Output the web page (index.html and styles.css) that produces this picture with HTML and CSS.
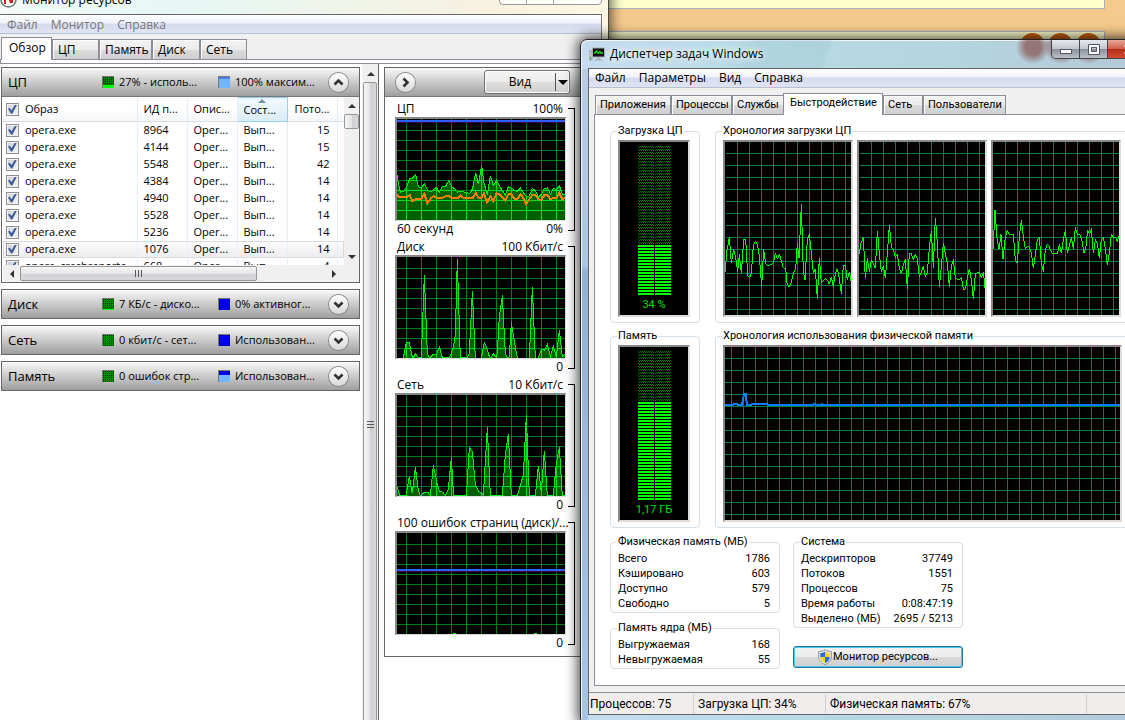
FILE: index.html
```html
<!DOCTYPE html>
<html lang="ru">
<head>
<meta charset="utf-8">
<title>Диспетчер задач Windows</title>
<link rel="stylesheet" href="styles.css">
</head>
<body>
<svg class="defs" width="0" height="0" aria-hidden="true">
  <defs>
    <path id="rm-grid" d="M28.5 0V303M73.5 0V303M118.5 0V303M163.5 0V303M208.5 0V303M253.5 0V303M298.5 0V303M343.5 0V303M388.5 0V303M433.5 0V303M478.5 0V303M0 34.5H504M0 64.5H504M0 94.5H504M0 124.5H504M0 154.5H504M0 184.5H504M0 214.5H504M0 244.5H504M0 274.5H504"/>
    <pattern id="tm-grid" width="12" height="12" y="11" patternUnits="userSpaceOnUse"><path d="M0 0H12V1H1V12H0Z" fill="#008040"/></pattern>
    <pattern id="tm-grid-mem" width="12" height="12" x="6" y="11" patternUnits="userSpaceOnUse"><path d="M0 0H12V1H1V12H0Z" fill="#008040"/></pattern>
    <pattern id="led-off" width="2" height="3" patternUnits="userSpaceOnUse"><path d="M0 0H1V1H0ZM1 1H2V2H1Z" fill="#008000"/></pattern>
    <pattern id="led-on" width="2" height="3" patternUnits="userSpaceOnUse"><path d="M0 0H2V2H0Z" fill="#00ff00"/></pattern>
    <pattern id="dots" width="2" height="2" patternUnits="userSpaceOnUse"><path d="M0 0H1V1H0Z" fill="#000" fill-opacity=".55"/></pattern>
    <symbol id="chev" viewBox="0 0 19 19"><path d="M5.500 7.500L9.500 11.500L13.500 7.500" fill="none" stroke="#333" stroke-width="2.600"/></symbol>
  </defs>
</svg>
<div class="desktop">
  <div class="panel panel-a"></div>
  <div class="panel panel-b"></div>
  <div class="orbs"><i></i><i></i><i></i></div>

  <section class="win resmon">
    <header class="rm-title">
      <svg width="17" height="17" viewBox="0 0 17 17"><circle cx="8.500" cy="8.500" r="7.500" fill="#fff" stroke="#777" stroke-width="1.500"/><path d="M5 3V13M8 4L11 12M12 5V12" stroke="#c22" stroke-width="2"/></svg>
      <span>Монитор ресурсов</span>
      <div class="rm-caption"><i></i><i></i><i></i></div>
    </header>
    <div class="rm-client">
      <nav class="menu rm-menu"><button>Файл</button><button>Монитор</button><button>Справка</button></nav>
      <div class="tabs rm-tabs" role="tablist">
        <button role="tab" class="tab on" aria-selected="true">Обзор</button><button role="tab" class="tab w46">ЦП</button><button role="tab" class="tab w52">Память</button><button role="tab" class="tab w48">Диск</button><button role="tab" class="tab w46">Сеть</button>
      </div>
      <div class="rm-rule"></div>
      <div class="rm-body">
        <div class="rm-left">
          <section class="card">
            <div class="bar">
              <h2>ЦП</h2>
              <span class="stat"><svg width="12" height="12"><rect width="12" height="12" fill="#008000"/><rect width="12" height="8" fill="url(#dots)"/><rect y="8" width="12" height="4" fill="#00ff00"/></svg>27% - исполь...</span>
              <span class="stat"><svg width="12" height="12"><rect width="12" height="12" fill="#73b4ff"/><rect width="12" height="2" fill="#4a80e8"/></svg>100% максим...</span>
              <button class="round" aria-label="Свернуть"><svg class="up" width="19" height="19"><use href="#chev"/></svg></button>
            </div>
            <div class="grid">
              <div class="view">
                <table>
                  <colgroup><col class="c-name"><col class="c-n"><col class="c-n"><col class="c-n"><col class="c-n"><col></colgroup>
                  <thead><tr><th><label><input type="checkbox" checked>Образ</label></th><th>ИД п...</th><th>Опис...</th><th class="sorted">Сост...</th><th class="num">Пото...</th><th></th></tr></thead>
                  <tbody>
                    <tr><td><label><input type="checkbox" checked>opera.exe</label></td><td>8964</td><td>Oper...</td><td>Вып...</td><td class="num">15</td><td></td></tr>
                    <tr><td><label><input type="checkbox" checked>opera.exe</label></td><td>4144</td><td>Oper...</td><td>Вып...</td><td class="num">15</td><td></td></tr>
                    <tr><td><label><input type="checkbox" checked>opera.exe</label></td><td>5548</td><td>Oper...</td><td>Вып...</td><td class="num">42</td><td></td></tr>
                    <tr><td><label><input type="checkbox" checked>opera.exe</label></td><td>4384</td><td>Oper...</td><td>Вып...</td><td class="num">14</td><td></td></tr>
                    <tr><td><label><input type="checkbox" checked>opera.exe</label></td><td>4940</td><td>Oper...</td><td>Вып...</td><td class="num">14</td><td></td></tr>
                    <tr><td><label><input type="checkbox" checked>opera.exe</label></td><td>5528</td><td>Oper...</td><td>Вып...</td><td class="num">14</td><td></td></tr>
                    <tr><td><label><input type="checkbox" checked>opera.exe</label></td><td>5236</td><td>Oper...</td><td>Вып...</td><td class="num">14</td><td></td></tr>
                    <tr class="hot"><td><label><input type="checkbox" checked>opera.exe</label></td><td>1076</td><td>Oper...</td><td>Вып...</td><td class="num">14</td><td></td></tr>
                    <tr><td><label><input type="checkbox" checked>opera_crashreporte...</label></td><td>668</td><td>Oper...</td><td>Вып...</td><td class="num">4</td><td></td></tr>
                  </tbody>
                </table>
              </div>
              <div class="vsb inner"><i class="ar ar-up"></i><i class="thumb"></i><i class="space"></i><i class="ar ar-down"></i></div>
              <div class="hsb"><i class="ar ar-left"></i><i class="thumb"><b class="grip"></b></i><i class="space"></i><i class="ar ar-right"></i></div>
            </div>
          </section>
          <section class="card"><div class="bar">
            <h2>Диск</h2>
            <span class="stat"><svg width="12" height="12"><rect width="12" height="12" fill="#008a00"/><rect width="12" height="10" fill="url(#dots)"/><rect y="10" width="12" height="2" fill="#00ff00"/></svg>7 КБ/с - диско...</span>
            <span class="stat"><svg width="12" height="12"><rect width="12" height="12" fill="#0000ff"/><rect width="12" height="12" fill="url(#dots)"/></svg>0% активног...</span>
            <button class="round" aria-label="Развернуть"><svg width="19" height="19"><use href="#chev"/></svg></button>
          </div></section>
          <section class="card"><div class="bar">
            <h2>Сеть</h2>
            <span class="stat"><svg width="12" height="12"><rect width="12" height="12" fill="#008a00"/><rect width="12" height="12" fill="url(#dots)"/></svg>0 кбит/с - сет...</span>
            <span class="stat"><svg width="12" height="12"><rect width="12" height="12" fill="#0000ff"/><rect width="12" height="12" fill="url(#dots)"/></svg>Использован...</span>
            <button class="round" aria-label="Развернуть"><svg width="19" height="19"><use href="#chev"/></svg></button>
          </div></section>
          <section class="card"><div class="bar">
            <h2>Память</h2>
            <span class="stat"><svg width="12" height="12"><rect width="12" height="12" fill="#008a00"/><rect width="12" height="12" fill="url(#dots)"/></svg>0 ошибок стр...</span>
            <span class="stat"><svg width="12" height="12"><rect width="12" height="12" fill="#73b4ff"/><rect width="12" height="4" fill="#0000ff"/><rect width="12" height="4" fill="url(#dots)"/></svg>Использован...</span>
            <button class="round" aria-label="Развернуть"><svg width="19" height="19"><use href="#chev"/></svg></button>
          </div></section>
        </div>
        <div class="vsb outer"><i class="ar ar-up"></i><i class="thumb"><b class="grip"></b></i></div>
        <div class="rm-right">
          <section class="card charts">
            <div class="bar">
              <button class="round" aria-label="Скрыть"><svg class="side" width="19" height="19"><use href="#chev"/></svg></button>
              <button class="split"><span>Вид</span><i></i></button>
            </div>
            <div class="meter">
              <div class="lab"><span>ЦП</span><span>100%</span></div>
              <svg class="plot" viewBox="0 0 504 303">
                <clipPath id="cp-cpu"><use href="#s-cpu"/></clipPath>
                <use href="#rm-grid" class="g"/>
                <path id="s-cpu" class="fill" transform="translate(-111 -177)" d="M108 480V345L111 345L116 375L122 396L132 393L140 380L149 356L158 354L167 344L175 380L184 384L193 370L203 390L212 396L221 388L230 382L238 396L247 380L257 378L266 362L275 380L284 386L293 396L302 393L311 396L330 400L338 385L347 338L355 372L365 318L372 368L382 405L391 347L400 377L410 360L418 377L427 392L436 405L445 380L454 384L463 390L472 394L481 384L490 398L499 410L508 408L517 385L526 392L535 412L544 402L553 386L562 384L571 402L580 384L589 390L598 377L607 402L618 402V480Z"/>
                <use href="#rm-grid" class="gl" clip-path="url(#cp-cpu)"/>
                <use href="#s-cpu" class="edge"/>
                <path class="orange" transform="translate(-111 -177)" d="M110 405L116 411L140 411L149 405L157 423L167 418L184 416L193 402L202 430L212 416L221 408L230 414L247 414L257 408L266 407L275 414L293 415L302 407L311 414L338 415L347 398L355 413L364 413L372 400L381 427L391 409L400 423L410 400L418 402L427 411L436 420L445 403L454 403L463 416L472 418L481 403L490 414L499 432L508 418L517 405L526 404L535 418L544 420L553 405L562 404L571 418L580 414L589 414L598 399L607 418L616 413"/>
                <path d="M0 10.500H504" stroke="#300040" stroke-width="3"/><path d="M0 6H504" class="blue"/>
              </svg>
              <div class="lab"><span>60 секунд</span><span>0%</span></div>
            </div>
            <div class="meter">
              <div class="lab"><span>Диск</span><span>100 Кбит/с</span></div>
              <svg class="plot" viewBox="0 0 504 303">
                <clipPath id="cp-disk"><use href="#s-disk"/></clipPath>
                <use href="#rm-grid" class="g"/>
                <path id="s-disk" class="fill" transform="translate(-51 -66)" d="M48 372L70 369L79 323L88 323L97 366L100 369L106 356L115 368L124 368L133 121L142 355L148 369L157 360L169 358L178 336L187 368L208 368L214 356L220 335L226 300L232 72L241 369L262 368L268 355L277 169L286 369L304 369L313 323L322 343L328 365L334 367L340 356L349 368L352 350L358 245L367 181L376 355L382 369L388 365L394 262L403 318L412 369L448 369L457 157L466 369L475 369L484 343L493 345L502 329L511 365L520 334L529 366L538 286L547 365L558 355V372Z"/>
                <use href="#rm-grid" class="gl" clip-path="url(#cp-disk)"/>
                <use href="#s-disk" class="edge"/>
              </svg>
              <div class="lab"><span></span><span>0</span></div>
            </div>
            <div class="meter">
              <div class="lab"><span>Сеть</span><span>10 Кбит/с</span></div>
              <svg class="plot" viewBox="0 0 504 303">
                <clipPath id="cp-net"><use href="#s-net"/></clipPath>
                <use href="#rm-grid" class="g"/>
                <path id="s-net" class="fill" transform="translate(-51 -480)" d="M48 785V755H51L60 782L78 782L88 724L97 775L106 697L115 765L121 782L133 772L145 773L151 782L160 691L172 748L178 768L190 773L196 782L202 770L205 764L214 667L220 770L222 782L259 782L268 637L277 650L286 750L295 768L307 774L310 782L322 577L331 782L367 782L376 660L385 598L394 782L412 782L430 720L439 541L448 782L466 782L475 694L484 772L493 648L502 782L520 782L529 685L538 637L547 782L558 782V785Z"/>
                <use href="#rm-grid" class="gl" clip-path="url(#cp-net)"/>
                <use href="#s-net" class="edge"/>
              </svg>
              <div class="lab"><span></span><span>0</span></div>
            </div>
            <div class="meter">
              <div class="lab"><span></span><span>100 ошибок страниц (диск)/...</span></div>
              <svg class="plot" viewBox="0 0 504 303">
                <use href="#rm-grid" class="g"/>
                <path d="M0 115.500H504" stroke="#300040" stroke-width="3"/><path d="M0 111H504" class="blue"/>
                <path d="M168 301.500H177M411 301.500H420" stroke="#0f0" stroke-width="3"/>
              </svg>
              <div class="lab"><span></span><span>0</span></div>
            </div>
          </section>
        </div>
      </div>
    </div>
  </section>

  <section class="win taskmgr">
    <header class="tm-title">
      <svg width="16" height="16" viewBox="0 0 16 16"><rect x="0" y="5" width="3" height="9" fill="#c8ccd0" stroke="#888" stroke-width=".6"/><rect x="1" y="11" width="1" height="2" fill="#0c0"/><rect x="3.500" y="2" width="12" height="9" fill="#111" stroke="#a8adb2"/><path d="M5 7H6L7.500 5L9 7.500L11 5.500L12 7H14" stroke="#1fe01f" fill="none" stroke-width="1.300"/><path d="M8 11.500H11V13H13V14.500H6V13H8Z" fill="#b0b4b8"/></svg>
      <h1>Диспетчер задач Windows</h1>
      <div class="caption">
        <button aria-label="Свернуть"><svg width="14" height="10"><rect x="1.500" y="5.500" width="11" height="4" fill="#fff" stroke="#556"/></svg></button>
        <button aria-label="Развернуть"><svg width="12" height="11"><path d="M.5.500H11.500V10.500H.5ZM3.500 3.500V7.500H8.500V3.500Z" fill="#fff" fill-rule="evenodd" stroke="#556"/></svg></button>
        <button class="close" aria-label="Закрыть"><svg width="13" height="11"><path d="M2 1L11 10M11 1L2 10" stroke="#fff" stroke-width="3"/></svg></button>
      </div>
    </header>
    <div class="tm-client">
      <nav class="menu tm-menu"><button>Файл</button><button>Параметры</button><button>Вид</button><button>Справка</button></nav>
      <div class="tabs tm-tabs" role="tablist">
        <button role="tab" class="tab t76">Приложения</button><button role="tab" class="tab t60">Процессы</button><button role="tab" class="tab t52">Службы</button><button role="tab" class="tab on" aria-selected="true">Быстродействие</button><button role="tab" class="tab t40">Сеть</button><button role="tab" class="tab t82">Пользователи</button>
      </div>
      <div class="pane">
        <div class="duo">
          <fieldset><legend>Загрузка ЦП</legend>
            <div class="gauge"><svg width="33" height="149"><rect width="16" height="99" fill="url(#led-off)"/><rect x="17" width="16" height="99" fill="url(#led-off)"/><rect y="99" width="16" height="50" fill="url(#led-on)"/><rect x="17" y="99" width="16" height="50" fill="url(#led-on)"/></svg><span>34 %</span></div>
          </fieldset>
          <fieldset class="wide"><legend>Хронология загрузки ЦП</legend>
            <div class="hist">
              <svg class="scr" viewBox="0 0 126 173"><rect width="126" height="173" fill="url(#tm-grid)"/><rect width="1" height="173"/><path transform="scale(.33333) translate(-405 -66)" d="M405 455L411 390L418 352L424 430L431 388L437 412L443 455L448 403L454 460L461 358L467 358L473 465L479 475L484 460L490 375L496 364L502 372L508 408L515 500L521 387L527 432L535 437L542 434L550 430L556 400L562 418L568 402L580 443L587 446L591 488L598 502L603 488L610 460L617 448L622 368L627 415L634 253L640 455L645 480L652 358L658 343L664 400L670 460L676 446L682 538L688 413L694 490L706 475L712 480L718 493L724 472L730 500L736 460L742 446L748 475L754 522L760 436L766 436L772 480L778 455L783 482"/></svg>
              <svg class="scr" viewBox="0 0 126 173"><rect width="126" height="173" fill="url(#tm-grid)"/><rect width="1" height="173"/><path transform="scale(.33333) translate(-27 -66)" d="M27 403L33 370L40 352L46 475L52 415L58 455L64 420L70 430L76 445L82 332L88 400L94 455L100 437L106 475L112 400L118 316L124 380L130 388L136 413L142 402L148 446L154 460L160 435L166 418L172 508L178 400L184 400L190 420L196 403L202 416L208 472L214 455L220 437L226 472L232 455L238 385L244 332L250 445L256 294L262 370L268 500L274 440L280 368L286 402L292 430L298 500L304 440L310 418L316 475L328 480L334 472L340 508L346 508L352 475L358 446L364 480L370 538L376 460L388 457L394 475L400 455L405 505"/></svg>
              <svg class="scr" viewBox="0 0 126 173"><rect width="126" height="173" fill="url(#tm-grid)"/><rect width="1" height="173"/><path transform="scale(.33333) translate(-429 -66)" d="M429 388L435 270L441 355L447 388L453 343L459 418L466 352L472 331L478 343L490 343L496 420L502 430L508 350L514 300L520 352L526 388L532 378L538 380L544 400L550 445L556 405L562 358L568 352L574 430L580 455L586 388L592 373L598 380L605 400L622 402L628 373L634 400L640 358L646 331L652 400L658 378L664 352L670 388L676 322L682 342L690 345L696 362L702 400L708 378L713 331L719 343L724 325L730 400L736 358L742 370L748 415L754 358L760 352L766 385L772 436L778 400L784 343L790 352L797 352L802 365L807 348"/></svg>
            </div>
          </fieldset>
        </div>
        <div class="duo">
          <fieldset><legend>Память</legend>
            <div class="gauge"><svg width="33" height="149"><rect width="16" height="51" fill="url(#led-off)"/><rect x="17" width="16" height="51" fill="url(#led-off)"/><rect y="51" width="16" height="98" fill="url(#led-on)"/><rect x="17" y="51" width="16" height="98" fill="url(#led-on)"/></svg><span>1,17 ГБ</span></div>
          </fieldset>
          <fieldset class="wide"><legend>Хронология использования физической памяти</legend>
            <div class="hist">
              <svg class="scr mem" viewBox="0 0 395 173"><rect width="395" height="173" fill="url(#tm-grid-mem)"/><path transform="scale(.33333) translate(-405 -66)" d="M405 240H429L432 237H441L444 240H456L462 207H467L471 240H484L486 237H530L533 240H669L672 237L678 240H693L696 237L700 240H1593"/></svg>
            </div>
          </fieldset>
        </div>
        <div class="info">
          <div class="col">
            <fieldset><legend>Физическая память (МБ)</legend>
              <dl><dt>Всего</dt><dd>1786</dd><dt>Кэшировано</dt><dd>603</dd><dt>Доступно</dt><dd>579</dd><dt>Свободно</dt><dd>5</dd></dl>
            </fieldset>
            <fieldset><legend>Память ядра (МБ)</legend>
              <dl><dt>Выгружаемая</dt><dd>168</dd><dt>Невыгружаемая</dt><dd>55</dd></dl>
            </fieldset>
          </div>
          <div class="col sys">
            <fieldset><legend>Система</legend>
              <dl><dt>Дескрипторов</dt><dd>37749</dd><dt>Потоков</dt><dd>1551</dd><dt>Процессов</dt><dd>75</dd><dt>Время работы</dt><dd>0:08:47:19</dd><dt>Выделено (МБ)</dt><dd>2695 / 5213</dd></dl>
            </fieldset>
            <button class="go"><svg width="14" height="16" viewBox="0 0 14 16"><path d="M7 .7C9 2 11 2.500 13.300 2.500V8C13.300 12 10 14.500 7 15.500C4 14.500.7 12 .7 8V2.500C3 2.500 5 2 7 .7Z" fill="#e8ecf0" stroke="#8a8f98"/><path d="M7 2.500C5.500 3.500 4 4 2.300 4V8H7Z" fill="#2a6fd0"/><path d="M7 2.500C8.500 3.500 10 4 11.700 4V8H7Z" fill="#f8d030"/><path d="M2.300 8H7V14C4.500 13 2.300 11.500 2.300 8Z" fill="#f8d030"/><path d="M11.700 8H7V14C9.500 13 11.700 11.500 11.700 8Z" fill="#2a6fd0"/></svg>Монитор ресурсов...</button>
          </div>
        </div>
      </div>
      <footer class="status"><span class="s1">Процессов: 75</span><span class="s2">Загрузка ЦП: 34%</span><span class="s3">Физическая память: 67%</span><span></span></footer>
    </div>
  </section>
</div>
</body>
</html>
```
FILE: styles.css
```css
* { box-sizing: border-box; }
html, body { margin: 0; height: 100%; }
body { font: 11px/14px "Open Sans", "Noto Sans", sans-serif; color: #000; overflow: hidden; }
button { font: inherit; color: inherit; margin: 0; padding: 0; border: 0; background: none; }
h1, h2 { margin: 0; font-weight: 400; }
svg { display: block; flex: none; }
.defs { position: absolute; }

.desktop { position: relative; height: 100vh; overflow: hidden; background: #f6ca8c; }
.panel { position: absolute; left: 560px; right: 20px; background: #ffffcc; border: 1px solid #9fb4c4; }
.panel-a { top: -10px; height: 19px; }
.panel-b { top: 31px; height: 60px; }
.orbs { position: absolute; top: 33px; right: 24px; display: flex; gap: 3px; }
.orbs i { width: 25px; height: 25px; border-radius: 50%; background: #c85f10; }

.win { position: absolute; display: flex; flex-direction: column; }

/* Resource monitor */
.resmon { left: -8px; width: 617px; top: -15px; bottom: -48px; padding: 0 6px 0 8px; background: linear-gradient(90deg, #f4faf9, #e6f7f5 30%, #f7f1e0 80%, #fdf8e4); border-right: 1px solid #4a4a40; box-shadow: 0 0 12px 2px rgba(0, 0, 0, .65); }
.rm-title { height: 29px; display: flex; align-items: center; gap: 5px; font-size: 12px; position: relative; }
.rm-caption { margin: 0 0 0 auto; align-self: flex-start; display: flex; height: 20px; width: 103px; border: 1px solid #999; border-radius: 0 0 4px 4px; background: rgba(255, 255, 255, .7); }
.rm-caption i { width: 27px; border-right: 1px solid #aaa; }
.rm-caption i:last-child { border: 0; }
.rm-client { flex: 1; display: flex; flex-direction: column; min-height: 0; background: #f0f0f0; border-top: 1px solid #666; border-right: 1px solid #777; }
.menu { display: flex; font-size: 12px; background: linear-gradient(#fff, #eef1f9 45%, #d5dbef 50%, #dfe4f4); border-bottom: 1px solid #b8bed4; }
.rm-menu { height: 19px; padding: 2px 0 0 7px; gap: 13px; color: #777; }

.tabs { display: flex; align-items: flex-end; position: relative; }
.tab { height: 20px; padding: 0 3px; text-align: left; border: 1px solid #8b8d98; border-bottom: 0; background: linear-gradient(#f3f3f3, #ebebeb 50%, #dcdcdc 50%, #cfcfcf); box-shadow: inset 1px 1px #fcfcfc; white-space: nowrap; flex: none; }
.tab.on { height: 23px; background: #fff; margin-bottom: -1px; padding-bottom: 3px; z-index: 1; position: relative; }
.rm-tabs { height: 26px; padding-left: 1px; border-bottom: 1px solid #8b8d98; font-size: 12px; }
.rm-tabs .tab { padding-left: 5px; }
.rm-tabs .tab.on { width: 51px; padding-left: 7px; }
.rm-tabs .tab.w46 { width: 47px; }
.rm-tabs .tab.w52 { width: 53px; }
.rm-tabs .tab.w48 { width: 48px; }
.rm-rule { height: 4px; background: #fff; border-bottom: 1px solid #8b8d98; border-left: 1px solid #8b8d98; }

.rm-body { flex: 1; display: flex; min-height: 0; background: #fff; }
.rm-left { width: 360px; padding: 3px 0 0 1px; display: flex; flex-direction: column; gap: 6px; }
.card { border: 1px solid #666; background: #fff; }
.bar { height: 28px; display: flex; align-items: center; padding: 0 11px 0 6px; background: linear-gradient(#fafafa, #d4d4d4 40%, #9e9e9e); }
.bar h2 { flex: none; width: 94px; font-size: 13px; line-height: 20px; }
.stat { flex: none; width: 116px; display: flex; align-items: center; gap: 5px; white-space: nowrap; }
.stat + .stat { flex: 1; width: auto; min-width: 0; }
.stat svg { border-top: 1px solid #777; border-left: 1px solid #777; }
.round { width: 19px; height: 19px; border-radius: 50%; background: linear-gradient(#fff, #d8d8d8); box-shadow: 0 0 0 1px #888; flex: none; }
.up { transform: rotate(180deg); }
.side { transform: rotate(-90deg); }

.grid { display: grid; grid-template-columns: 1fr 15px; border-top: 1px solid #777; padding-left: 1px; }
.view { height: 168px; overflow: hidden; }
table { width: 100%; table-layout: fixed; border-collapse: collapse; }
.c-name { width: 134px; }
.c-n { width: 50px; }
th, td { padding: 0 0 0 6px; text-align: left; font-weight: 400; border-right: 1px solid #e3effb; white-space: nowrap; overflow: hidden; height: 17px; }
th:first-child, td:first-child { padding-left: 3px; }
th { height: 24px; border-bottom: 1px solid #d8dde3; background: linear-gradient(#fff 50%, #f4f6f8); }
th.sorted { background: linear-gradient(#f2f9fd, #d8ecf6); border: 1px solid #96d0ec; position: relative; }
th.sorted::before { content: ""; position: absolute; top: 1px; left: 20px; border: 4px solid transparent; border-top: 0; border-bottom: 4px solid #6a93ac; }
th.num, td.num { text-align: right; padding: 0 7px 0 0; }
th:last-child, td:last-child { border-right: 0; }
.hot { background: linear-gradient(#fdfdfd, #ececec); box-shadow: inset 0 0 0 1px #dadada; }
label { display: flex; align-items: center; gap: 6px; }
input { appearance: none; width: 13px; height: 13px; margin: 0; flex: none; border: 1px solid #8e8f8f; background: linear-gradient(135deg, #cbcfd5, #f6f6f6); box-shadow: inset 0 0 0 1px #f4f4f4; }
input::before { content: ""; display: block; width: 9px; height: 9px; margin: 1px; background: #3c5a9c; clip-path: polygon(0 45%, 18% 35%, 40% 62%, 78% 0, 100% 0, 48% 100%, 34% 100%); }

.vsb { display: flex; flex-direction: column; background: #f0f0f0; }
.vsb .thumb, .hsb .thumb { display: flex; align-items: center; justify-content: center; border: 1px solid #979797; border-radius: 2px; background: linear-gradient(90deg, #f6f6f6, #e4e4e4 50%, #cfcfd2 55%, #d8d8dc); }
.hsb .thumb { background: linear-gradient(#f6f6f6, #e6e6e6 50%, #d2d2d5 55%, #d8d8dc); }
.ar { flex: none; width: 15px; height: 17px; display: grid; place-items: center; }
.ar::before { content: ""; border: 4px solid transparent; }
.ar-up::before { border-top: 0; border-bottom-color: #333; }
.ar-down::before { border-bottom: 0; border-top-color: #333; }
.ar-left { width: 17px; }
.ar-left::before { border-left: 0; border-right-color: #333; }
.ar-right::before { border-right: 0; border-left-color: #333; }
.inner .thumb { height: 15px; }
.space { flex: 1; }
.hsb { grid-column: 1 / -1; display: flex; align-items: center; height: 17px; padding-right: 18px; background: #f0f0f0; }
.hsb .thumb { width: 237px; height: 15px; }
.grip { width: 8px; height: 7px; background: repeating-linear-gradient(90deg, #555 0 1px, transparent 1px 3px); }
.outer { width: 17px; padding: 1px 1px 0; border-right: 1px solid #666; margin: 0 5px 0 2px; }
.outer .thumb { flex: 1; }
.outer .grip { width: 7px; height: 8px; background: repeating-linear-gradient(#555 0 1px, transparent 1px 3px); }

.rm-right { flex: 1; padding-top: 3px; }
.charts { padding-bottom: 4px; }
.charts .bar { padding: 0 11px; margin-bottom: 3px; border-bottom: 1px solid #777; height: 29px; }
.split { flex: none; width: 86px; height: 24px; margin-left: 69px; display: flex; align-items: center; border: 1px solid #707070; border-radius: 3px; background: linear-gradient(#f4f4f4, #ececec 50%, #dedede 50%, #d0d0d0); box-shadow: inset 0 0 0 1px #fcfcfc; font-size: 12px; }
.split span { flex: 1; text-align: center; }
.split i { width: 14px; height: 18px; border-left: 1px solid #555; display: grid; place-items: center; }
.split i::before { content: ""; border: 5px solid transparent; border-top-color: #000; border-bottom: 0; }
.meter { width: 180px; height: 138px; margin-left: 10px; position: relative; font-size: 12px; }
.meter::after { content: ""; position: absolute; left: 173px; width: 6px; top: 8px; bottom: 7px; border: 1px solid #000; border-left: 0; }
.lab { display: flex; justify-content: space-between; height: 17px; line-height: 17px; padding: 0 2px; width: 170px; white-space: nowrap; }
.plot { width: 171px; height: 104px; background: #000; border: solid #888; border-width: 2px 1px 1px 2px; border-right-color: #ddd; border-bottom-color: #ddd; }
.plot path, .plot use { shape-rendering: crispEdges; }
.plot + .lab { line-height: 15px; }
.g { stroke: #007d18; stroke-width: 3; }
.gl { stroke: #00e018; stroke-width: 3; }
.fill { fill: #006000; stroke: #00f010; stroke-width: 3; }
.edge { fill-opacity: 0; }
.plot .orange { fill: none; stroke: #ff8000; stroke-width: 6; }
.plot .blue { stroke: #2f5fff; stroke-width: 6; }

/* Task manager */
.taskmgr { left: 580px; right: -37px; top: 39px; bottom: -5px; padding: 0 8px 9px 7px; border: 1px solid #222; border-radius: 7px; background: linear-gradient(90deg, #c6dcf0, #b9dbe6 30%, #b5d6e0 60%, #b2c8d8); box-shadow: 0 0 13px 2px rgba(0, 0, 0, .75), inset 1px 1px #eef6fc; }
.taskmgr::before { content: ""; position: absolute; inset: 29px auto 0 1px; width: 6px; background: linear-gradient(#b8cde6, #aac6e4 30%, #8fb2d6 31%, #a8c5e4); }
.tm-title { height: 28px; display: flex; align-items: center; padding: 0 0 0 1px; gap: 5px; position: relative; background: linear-gradient(110deg, transparent 25%, #9cc4d055 30% 42%, transparent 43%), radial-gradient(circle at 445px 7px, #803a3499 8px, transparent 17px), radial-gradient(circle at 473px 7px, #803a3499 8px, transparent 17px), radial-gradient(circle at 501px 7px, #803a3499 8px, transparent 17px); }
.tm-title h1 { font-size: 12px; line-height: 16px; text-shadow: 0 0 6px #fff, 0 0 8px #fff; }
.caption { display: flex; align-self: flex-start; margin-left: auto; height: 19px; border: 1px solid #444; border-top: 0; border-radius: 0 0 5px 5px; overflow: hidden; width: 102px; }
.caption button { width: 28px; display: grid; place-items: center; border-right: 1px solid #445; background: linear-gradient(#e6eaee, #c0c6cc 48%, #8a8f98 50%, #b8c0c8); }
.caption .close { flex: 1; background: linear-gradient(#e8a898, #d06050 48%, #b02c18 50%, #d05030); }
.tm-client { flex: 1; display: flex; flex-direction: column; background: #f0f0f0; border: 1px solid #666; position: relative; font-family: Roboto, "Open Sans", sans-serif; }
.tm-menu { height: 19px; padding-left: 6px; gap: 13px; font-family: "Open Sans", "Noto Sans", sans-serif; }
.tm-tabs { height: 26px; padding-left: 6px; }
.tm-tabs .tab { height: 19px; padding-left: 4px; }
.tm-tabs .tab.on { width: 100px; height: 22px; padding-left: 6px; margin-left: -1px; }
.tm-tabs .t76 { width: 76px; }
.tm-tabs .t60 { width: 61px; }
.tm-tabs .t52 { width: 52px; }
.tm-tabs .t40 { width: 40px; }
.tm-tabs .t82 { width: 83px; }
.pane { margin: 0 0 6px 5px; flex: 1; background: #fff; border: 1px solid #8b8d98; border-right: 0; padding: 9px 0 0 15px; display: flex; flex-direction: column; gap: 6px; }
.duo { display: grid; grid-template-columns: 90px 1fr; gap: 15px; }
fieldset { margin: 0; min-width: 0; padding: 2px 7px 6px; border: 1px solid #d5dfe8; border-radius: 4px; }
legend { padding: 0 1px; margin-left: -1px; line-height: 14px; white-space: nowrap; }
.duo fieldset { height: 199px; }
.gauge { width: 72px; height: 177px; background: #000; border: 2px solid #888; border-right-color: #ddd; border-bottom-color: #ddd; display: flex; flex-direction: column; align-items: center; gap: 3px; padding-top: 4px; color: #00e010; }
.hist { display: flex; gap: 4px; }
.wide { border-right: 0; border-radius: 4px 0 0 4px; }
.scr { width: 130px; height: 177px; background: #000; border: 2px solid #888; border-right-color: #ddd; border-bottom-color: #ddd; }
.scr.mem { width: 399px; }
.scr path { fill: none; stroke: #0f0; stroke-width: 3; shape-rendering: crispEdges; }
.scr.mem path { stroke: #0080ff; stroke-width: 6; }
.info { display: flex; gap: 13px; padding-top: 1px; }
.col { width: 170px; display: flex; flex-direction: column; gap: 8px; }
.col fieldset { padding: 2px 9px 1px 7px; }
.sys { gap: 18px; }
dl { margin: 0; display: grid; grid-template-columns: auto auto; line-height: 15px; }
dt { white-space: nowrap; }
dd { margin: 0; text-align: right; white-space: nowrap; }
.go { height: 22px; display: flex; align-items: center; justify-content: center; gap: 1px; border: 1px solid #2f6f9c; border-radius: 3px; background: linear-gradient(#f2f2f2, #ebebeb 50%, #dadada 50%, #cfcfcf); box-shadow: inset 0 0 0 1px #45cdf0; }
.status { height: 22px; display: flex; align-items: center; border-top: 1px solid #8b8d98; background: #f1edec; font-size: 12px; white-space: nowrap; }
.status span { height: 20px; line-height: 21px; border-right: 1px solid #d2cecd; padding-left: 4px; }
.status .s1 { width: 105px; padding-left: 1px; }
.status .s2 { width: 132px; }
.status .s3 { width: 261px; }
.status span:last-child { border: 0; }
```
